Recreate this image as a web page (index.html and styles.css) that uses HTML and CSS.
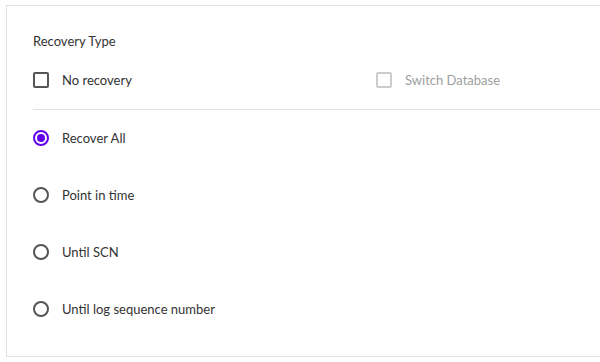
FILE: index.html
```html
<!DOCTYPE html>
<html>
<head>
<meta charset="utf-8">
<link rel="stylesheet" href="styles.css">
</head>
<body>
<div class="card">
  <div class="title">Recovery Type</div>
  <div class="top-row">
    <label class="check">
      <span class="box"></span>
      <span class="label">No recovery</span>
    </label>
    <label class="check disabled">
      <span class="box"></span>
      <span class="label">Switch Database</span>
    </label>
  </div>
  <div class="divider"></div>
  <div class="radios">
    <label class="radio checked"><span class="dot"></span><span class="label">Recover All</span></label>
    <label class="radio"><span class="dot"></span><span class="label">Point in time</span></label>
    <label class="radio"><span class="dot"></span><span class="label">Until SCN</span></label>
    <label class="radio"><span class="dot"></span><span class="label">Until log sequence number</span></label>
  </div>
</div>
</body>
</html>
```
FILE: styles.css
```css
html, body {
  margin: 0;
  padding: 0;
  background: #fff;
  overflow: hidden;
}
body {
  font-family: "Lato", "Open Sans", sans-serif;
  font-size: 13px;
  color: #333;
}
.card {
  margin: 5px 0 0 6px;
  height: 350px;
  border: 1px solid #e0e0e0;
  border-right: 0;
  padding: 0 0 0 26px;
  box-sizing: content-box;
}
.title {
  height: 18px;
  line-height: 18px;
  margin-top: 26px;
}
.top-row {
  display: flex;
  align-items: center;
  height: 20px;
  margin-top: 20px;
}
.check {
  display: flex;
  align-items: center;
  gap: 13px;
  width: 343px;
  flex-shrink: 0;
}
.check.disabled {
  width: auto;
}
.box {
  width: 12px;
  height: 12px;
  border: 2px solid #555;
  border-radius: 2px;
  flex-shrink: 0;
}
.check.disabled .box {
  border-color: #ccc;
}
.check.disabled .label {
  color: #9e9e9e;
}
.divider {
  height: 1px;
  background: #e0e0e0;
  margin-top: 19px;
}
.radios {
  display: flex;
  flex-direction: column;
  gap: 37px;
  margin-top: 18px;
}
.radio {
  display: flex;
  align-items: center;
  gap: 13px;
  height: 20px;
}
.dot {
  width: 12px;
  height: 12px;
  border: 2px solid #555;
  border-radius: 50%;
  position: relative;
  flex-shrink: 0;
}
.radio.checked .dot {
  border-color: #6200ee;
}
.radio.checked .dot::after {
  content: "";
  position: absolute;
  left: 2px;
  top: 2px;
  width: 8px;
  height: 8px;
  border-radius: 50%;
  background: #6200ee;
}
```
